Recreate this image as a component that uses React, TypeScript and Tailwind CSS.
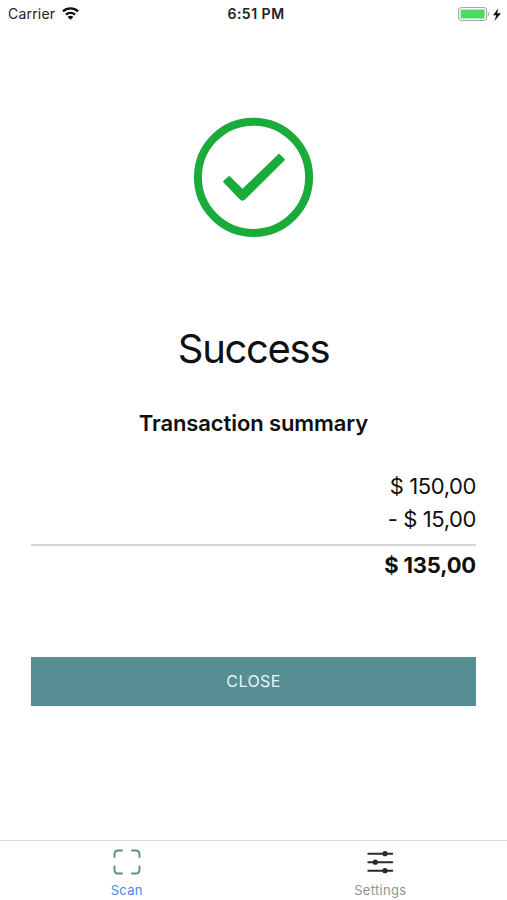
import React from "react";

function StatusBar() {
  return (
    <header className="grid h-7 shrink-0 grid-cols-3 items-center text-[14px] leading-7 text-[#222]">
      <div className="flex items-center gap-[7px] pl-2">
        <span className="tracking-[0.2px]">Carrier</span>
        <svg className="-mt-px" width="17" height="13" viewBox="0 0 17 13" fill="none" stroke="#111" strokeWidth="2.3">
          <path d="M1 4.4C5.2 .4 11.8 .4 16 4.4" />
          <path d="M3.9 7.6C6.5 5.2 10.5 5.2 13.1 7.6" />
          <path d="M8.5 12.8L5.6 9.9C7.2 8.4 9.8 8.4 11.4 9.9Z" fill="#111" stroke="none" />
        </svg>
      </div>
      <div className="pl-[5px] text-center font-semibold whitespace-nowrap">
        <span className="tracking-[0.5px]">6:51 PM</span>
      </div>
      <div className="flex items-center justify-end pr-[5px]">
        <svg className="-mt-px" width="45" height="16" viewBox="0 0 45 16">
          <rect x="1.6" y="1.5" width="28" height="13" rx="3.2" fill="#fff" stroke="#a9a9a9" strokeWidth="1.2" />
          <rect x="3.6" y="3.5" width="24" height="9" rx="1.2" fill="#4cd964" />
          <path d="M31.2 5.8C33 6.5 33 9.5 31.2 10.2Z" fill="#a9a9a9" />
          <path d="M41.2 2.2L36 9.2H39.2L37.5 15L44 7.3H40.2Z" fill="#111" />
        </svg>
      </div>
    </header>
  );
}

function SuccessIcon() {
  return (
    <svg className="mx-auto mt-[89px] block" width="121" height="121" viewBox="0 0 121 121">
      <circle cx="60.5" cy="60.3" r="55.6" fill="none" stroke="#1aab3a" strokeWidth="8" />
      <path
        d="M30.6 63.8L35.2 59.4Q36.1 58.6 37 59.4L49.5 71.8L85.2 37.2Q86.1 36.4 87 37.2L91.4 41.8Q92.2 42.7 91.4 43.6L52.1 82.5Q49.5 84.8 46.9 82.5L30.6 65.6Q29.7 64.7 30.6 63.8Z"
        fill="#1aab3a"
      />
    </svg>
  );
}

function ScanIcon() {
  return (
    <svg width="28" height="26" viewBox="0 0 28 26" fill="none" stroke="#558e8b" strokeWidth="1.9" strokeLinecap="round">
      <path d="M1.5 8V5.3Q1.5 1.5 5.3 1.5H9M19 1.5H22.7Q26.5 1.5 26.5 5.3V8M26.5 17.5V20.7Q26.5 24.5 22.7 24.5H19M9 24.5H5.3Q1.5 24.5 1.5 20.7V17.5" />
    </svg>
  );
}

function SettingsIcon() {
  return (
    <svg width="28" height="26" viewBox="0 0 28 26" fill="#292a2c" stroke="#292a2c" strokeWidth="2" strokeLinecap="round">
      <path d="M2.3 4.7H26.3M2.3 13.2H26.3M2.3 21.7H26.3" />
      <circle cx="19" cy="4.7" r="1.6" />
      <circle cx="9.3" cy="13.2" r="1.6" />
      <circle cx="19" cy="21.7" r="1.6" />
    </svg>
  );
}

export default function App() {
  return (
    <div className="flex h-[900px] w-[507px] flex-col overflow-hidden bg-white font-['Inter',sans-serif] text-[#101010]">
      <StatusBar />
      <main className="flex flex-1 flex-col px-[31px]">
        <SuccessIcon />
        <h1 className="mt-[84px] text-center text-[40px] leading-[54px] font-normal tracking-[-1.3px]">Success</h1>
        <h2 className="mt-[32px] text-center text-[22px] leading-[30px] font-semibold tracking-[-0.1px]">
          Transaction summary
        </h2>
        <div className="mt-[32px] text-right text-[22px] leading-[33px] tracking-[-0.4px]">
          <p>$ 150,00</p>
          <p>- $ 15,00</p>
        </div>
        <div className="mt-[8px] border-t-2 border-[#d4d4d4] pt-[3px] text-right text-[22px] leading-[33px] font-bold tracking-[-0.2px]">
          $ 135,00
        </div>
        <button className="mt-[75px] h-[49px] w-full bg-[#568e94] text-[16px] leading-[49px] tracking-[0.4px] text-[#e7f4f6]">
          CLOSE
        </button>
      </main>
      <nav className="grid h-[60px] shrink-0 grid-cols-2 border-t border-[#dcdcdc] text-[13px] leading-4 tracking-[0.3px]">
        <div className="flex flex-col items-center gap-[7px] pt-[8px] text-[#4b8af0]">
          <ScanIcon />
          <span>Scan</span>
        </div>
        <div className="flex flex-col items-center gap-[7px] pt-[8px] text-[#929292]">
          <SettingsIcon />
          <span>Settings</span>
        </div>
      </nav>
    </div>
  );
}
